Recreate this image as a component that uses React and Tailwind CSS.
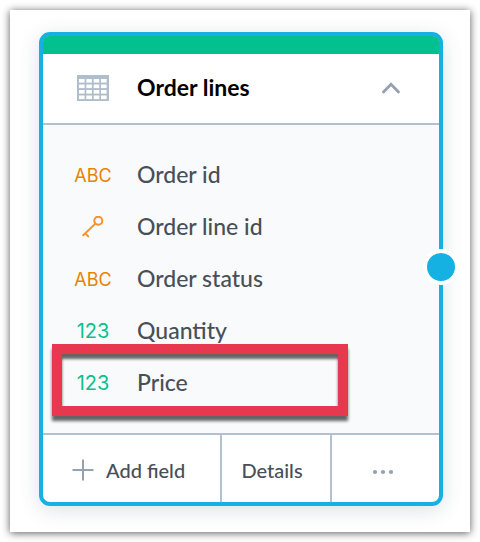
import React, { useState } from 'react';

const fields = [
  { name: 'Order id', type: 'text' },
  { name: 'Order line id', type: 'key' },
  { name: 'Order status', type: 'text' },
  { name: 'Quantity', type: 'number' },
  { name: 'Price', type: 'number', highlighted: true },
];

const TableIcon = () => (
  <svg width="32" height="26" viewBox="0 0 32 26" fill="none" aria-hidden="true">
    <rect width="32" height="26" fill="#b0becb" />
    {[4, 9.5, 15, 20.5].map((y) =>
      [2, 9.3, 16.7, 24].map((x) => (
        <rect key={`${x}-${y}`} x={x} y={y} width="5.6" height="3.6" fill="#fff" />
      ))
    )}
  </svg>
);

const KeyIcon = () => (
  <svg width="22" height="22" viewBox="0 0 22 22" fill="none" stroke="#f7922d" strokeWidth="2" strokeLinecap="round" aria-hidden="true">
    <circle cx="16.3" cy="4.7" r="4" />
    <path d="M13.4 7.6L1.2 19.2M3.4 17.4l2.8 3" />
  </svg>
);

const FieldType = ({ type }) => {
  if (type === 'key') return <KeyIcon />;
  if (type === 'number') {
    return <span className="font-['Inter',sans-serif] text-[20px] font-normal text-[#0bbf8b]">123</span>;
  }
  return <span className="font-['Inter',sans-serif] text-[18px] font-normal text-[#e88300]">ABC</span>;
};

const App = () => {
  const [open, setOpen] = useState(true);

  return (
    <div className="bg-white p-[10px] font-['Lato',sans-serif] font-medium text-[#474f58]">
      <div className="bg-white pt-[22px] pr-[27px] pb-[26px] pl-[29px] shadow-[0_1px_8px_rgba(0,0,0,0.65)]">
        <div className="relative rounded-[11px] border-4 border-[#16b1e3] bg-white shadow-[0_4px_20px_rgba(40,60,90,0.16)]">
          <div className="h-[18px] rounded-t-md bg-[#02c18e]" />

          <div className="flex h-[71px] items-center border-b-2 border-[#b3c1cf] pr-[38px] pb-[2px]">
            <div className="flex w-[94px] shrink-0 justify-center pl-[6px]">
              <TableIcon />
            </div>
            <h2 className="grow text-[23px] font-bold text-black">Order lines</h2>
            <button type="button" aria-label="Toggle fields" aria-expanded={open} onClick={() => setOpen(!open)}>
              <svg width="20" height="12" viewBox="0 0 20 12" fill="none" stroke="#94a1b0" strokeWidth="2.8" strokeLinecap="round" aria-hidden="true">
                <path d="M2.5 10L10 2.2l7.5 7.8" />
              </svg>
            </button>
          </div>

          {open && (
            <ul className="bg-[#f9fafc] py-6">
              {fields.map((field) => (
                <li key={field.name} className="relative flex h-[52px] items-center">
                  <div className="flex w-[94px] shrink-0 justify-center pl-[6px]">
                    <FieldType type={field.type} />
                  </div>
                  <span className="pb-[2px] text-[23px]">{field.name}</span>
                  {field.highlighted && (
                    <div className="pointer-events-none absolute -top-[13px] left-[9px] h-[72px] w-[296px] border-[10px] border-[#e8384f] shadow-[0_5px_3px_rgba(0,0,0,0.6),inset_0_5px_3px_rgba(0,0,0,0.6)]" />
                  )}
                </li>
              ))}
            </ul>
          )}

          <div className="grid h-[69px] grid-cols-[179fr_110fr_107fr] border-t-2 border-[#b3c1cf] text-[20px]">
            <button type="button" className="flex items-center gap-3 border-r-2 border-[#b3c1cf] pt-[2px] pl-[29px]">
              <svg width="22" height="22" viewBox="0 0 22 22" fill="none" stroke="#94a1b0" strokeWidth="2" aria-hidden="true">
                <path d="M11 0.5V21.5M0.5 11H21.5" />
              </svg>
              Add field
            </button>
            <button type="button" className="border-r-2 border-[#b3c1cf] pt-[2px] pr-2">Details</button>
            <button type="button" aria-label="More" className="flex items-center justify-center pt-[6px] pr-[6px]">
              <svg width="22" height="6" viewBox="0 0 22 6" fill="#94a1b0" aria-hidden="true">
                <circle cx="3" cy="3" r="2.1" />
                <circle cx="11" cy="3" r="2.1" />
                <circle cx="19" cy="3" r="2.1" />
              </svg>
            </button>
          </div>

          <div className="absolute top-[213px] -right-5 size-9 rounded-full border-4 border-white bg-[#16b1e3]" />
        </div>
      </div>
    </div>
  );
};

export default App;
